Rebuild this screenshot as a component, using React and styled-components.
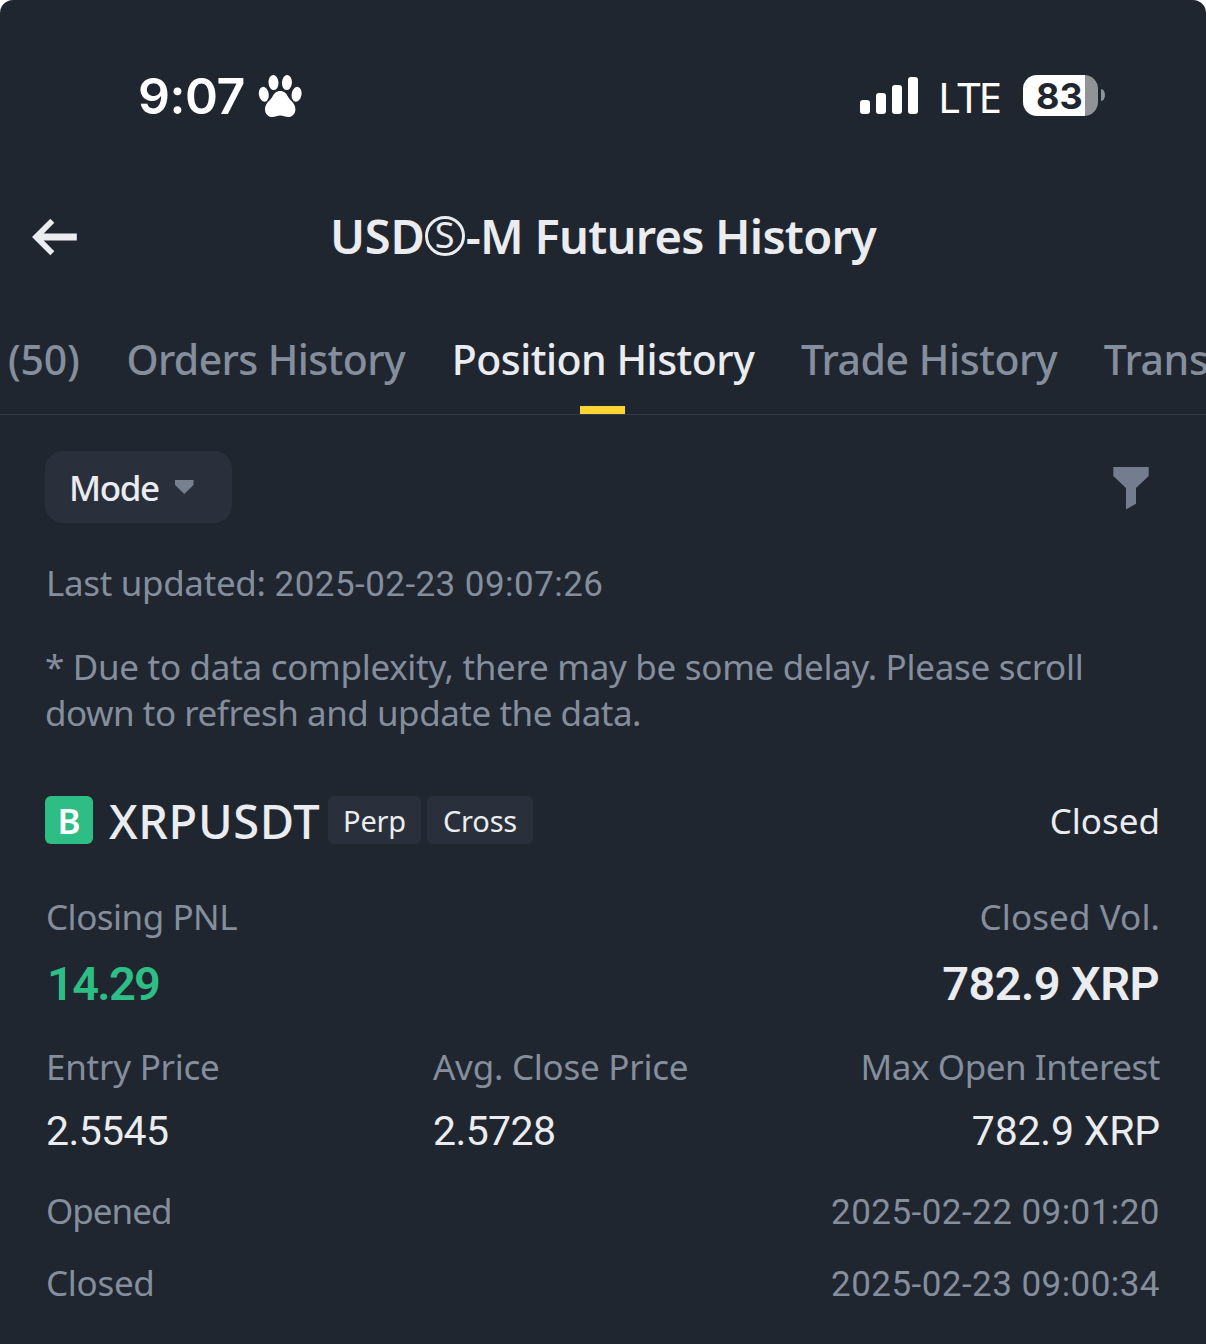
import styled, { createGlobalStyle } from "styled-components";

const TABS = [
  { label: "(50)", ls: -0.2 },
  { label: "Orders History", ls: -0.6 },
  { label: "Position History", ls: -0.5, active: true },
  { label: "Trade History", ls: -0.45 },
  { label: "Trans", ls: -0.4 },
];

const BARS = [14, 21, 29, 37];

export default function App() {
  return (
    <>
      <GlobalStyle />
      <Screen>
        <StatusBar>
          <StatusGroup>
            <Time>9:07</Time>
            <PawIcon />
          </StatusGroup>
          <StatusGroup>
            <Signal>
              {BARS.map((height) => (
                <SignalBar key={height} $height={height} />
              ))}
            </Signal>
            <Network>LTE</Network>
            <Battery>
              <BatteryBody>83</BatteryBody>
              <BatteryTip />
            </Battery>
          </StatusGroup>
        </StatusBar>

        <Header>
          <BackIcon />
          <Title>
            <TitlePart $ls={-0.2}>USD</TitlePart>
            <CircledS>S</CircledS>
            <TitlePart $ls={-0.75}>-M Futures History</TitlePart>
          </Title>
        </Header>

        <TabBar>
          {TABS.map(({ label, ls, active }) => (
            <Tab key={label} $ls={ls} $active={active}>
              {label}
            </Tab>
          ))}
        </TabBar>

        <Content>
          <Toolbar>
            <ModeButton>
              <ModeLabel>Mode</ModeLabel>
              <CaretIcon />
            </ModeButton>
            <FilterIcon />
          </Toolbar>

          <Updated>
            <Text $ls={-0.35}>Last updated:</Text>
            <Digits $ls={0.45}>2025-02-23 09:07:26</Digits>
          </Updated>

          <Notice>
            <Text $ls={-0.3}>
              * Due to data complexity, there may be some delay. Please scroll
            </Text>
            <Text $ls={-0.48}>down to refresh and update the data.</Text>
          </Notice>

          <PairRow>
            <Side>B</Side>
            <Symbol>XRPUSDT</Symbol>
            <Tag $width={93}>Perp</Tag>
            <Tag $width={106}>Cross</Tag>
            <Status>Closed</Status>
          </PairRow>

          <Summary>
            <Field>
              <Label $ls={-0.5}>Closing PNL</Label>
              <BigValue $green $ls={-1.7}>
                14.29
              </BigValue>
            </Field>
            <Field $right>
              <Label $ls={0.1}>Closed Vol.</Label>
              <BigValue $ls={-0.6}>782.9 XRP</BigValue>
            </Field>
          </Summary>

          <Prices>
            <Field>
              <Label $ls={-0.25}>Entry Price</Label>
              <Value $ls={-0.6}>2.5545</Value>
            </Field>
            <Field>
              <Label $ls={-0.25}>Avg. Close Price</Label>
              <Value $ls={-0.6}>2.5728</Value>
            </Field>
            <Field $right>
              <Label $ls={-0.45}>Max Open Interest</Label>
              <Value $ls={-0.2}>782.9 XRP</Value>
            </Field>
          </Prices>

          <Times>
            <TimeRow>
              <Text $ls={-1}>Opened</Text>
              <Digits $ls={0.45}>2025-02-22 09:01:20</Digits>
            </TimeRow>
            <TimeRow>
              <Text $ls={-0.3}>Closed</Text>
              <Digits $ls={0.45}>2025-02-23 09:00:34</Digits>
            </TimeRow>
          </Times>
        </Content>
      </Screen>
    </>
  );
}

function PawIcon() {
  return (
    <svg width="44" height="44" viewBox="0 0 44 44" fill="#fff">
      <ellipse cx="5.8" cy="20.3" rx="4.9" ry="7.5" transform="rotate(-9 5.8 20.3)" />
      <ellipse cx="15.5" cy="8.6" rx="5" ry="7.5" transform="rotate(-4 15.5 8.6)" />
      <ellipse cx="28.9" cy="8.6" rx="5" ry="7.5" transform="rotate(4 28.9 8.6)" />
      <ellipse cx="38.6" cy="20.3" rx="4.9" ry="7.5" transform="rotate(9 38.6 20.3)" />
      <path d="M22.2 17c3.8 0 6.1 2.3 8 6 1.7 3.3 7.2 6.1 7.2 12.2 0 4.6-3.1 7.8-7.2 7.8-3.2 0-5-1.5-8-1.5s-4.8 1.5-8 1.5c-4.1 0-7.2-3.2-7.2-7.8 0-6.1 5.500-8.900 7.200-12.200 1.900-3.700 4.200-6 8-6z" />
    </svg>
  );
}

function BackIcon() {
  return (
    <svg width="46" height="38" viewBox="0 0 46 38" fill="#eaecef">
      <path d="M0 19 18.3.7l4 4-10.6 10.8H44.8v7H11.7l10.6 10.8-4 4z" />
    </svg>
  );
}

function CaretIcon() {
  return (
    <svg width="19" height="14" viewBox="0 0 19 14" fill="#76808f">
      <path d="M0 0h18.5v5L9.3 14 0 5z" />
    </svg>
  );
}

function FilterIcon() {
  return (
    <svg width="36" height="43" viewBox="0 0 36 43" fill="#747d8e">
      <path d="M.3 0h35.4v9L23 21v15.7L13 42.5V21L.3 9z" />
    </svg>
  );
}

const GlobalStyle = createGlobalStyle`
  * {
    box-sizing: border-box;
  }

  body {
    margin: 0;
    background: #fff;
  }
`;

const Screen = styled.div`
  width: 1206px;
  height: 1344px;
  overflow: hidden;
  border-radius: 13px 13px 0 0;
  background: #202630;
  color: #eaecef;
  font-family: "Noto Sans", "Liberation Sans", sans-serif;
  font-size: 35px;
  line-height: 46px;

  svg {
    display: block;
    flex-shrink: 0;
  }
`;

const StatusBar = styled.div`
  height: 192px;
  padding: 0 101px 0 138px;
  display: flex;
  align-items: center;
  justify-content: space-between;
  color: #fff;
  font-family: Inter, sans-serif;
`;

const StatusGroup = styled.div`
  display: flex;
  align-items: center;
`;

const Time = styled.span`
  width: 120px;
  font-size: 50px;
  font-weight: 600;
  letter-spacing: -0.5px;
`;

const Signal = styled.div`
  height: 37px;
  margin-bottom: 2px;
  display: flex;
  align-items: flex-end;
  gap: 6px;
`;

const SignalBar = styled.i`
  width: 10px;
  height: ${({ $height }) => $height}px;
  border-radius: 3px;
  background: #fff;
`;

const Network = styled.span`
  width: 84px;
  padding: 2px 0 0 20px;
  margin-right: 21px;
  font-family: "Noto Sans", sans-serif;
  font-size: 42px;
  letter-spacing: -2px;
`;

const Battery = styled.div`
  margin-bottom: 2px;
  display: flex;
  align-items: center;
  gap: 3px;
`;

const BatteryBody = styled.div`
  width: 75px;
  height: 41px;
  padding-left: 13px;
  border-radius: 14px;
  background: linear-gradient(to right, #fff 62px, #909398 62px);
  color: #202630;
  font-size: 36px;
  font-weight: 700;
  line-height: 42px;
`;

const BatteryTip = styled.i`
  width: 4px;
  height: 12px;
  border-radius: 0 4px 4px 0 / 0 6px 6px 0;
  background: #909398;
`;

const Header = styled.div`
  height: 90px;
  padding: 0 32px;
  display: grid;
  grid-template-columns: 1fr auto 1fr;
  align-items: center;
`;

const Title = styled.h1`
  margin: 0;
  display: flex;
  align-items: center;
  font-size: 47px;
  font-weight: 600;
`;

const TitlePart = styled.span`
  margin-bottom: 2px;
  white-space: pre;
  letter-spacing: ${({ $ls }) => $ls}px;
`;

const CircledS = styled.span`
  width: 40px;
  height: 40px;
  margin: 0 1px 3px 0;
  border: 3px solid #eaecef;
  border-radius: 50%;
  font-size: 36px;
  font-weight: 400;
  line-height: 32px;
  text-align: center;
`;

const TabBar = styled.nav`
  height: 133px;
  padding: 53px 0 0 8px;
  display: flex;
  gap: 46.7px;
  border-bottom: 1px solid #333b47;
`;

const Tab = styled.span`
  position: relative;
  flex-shrink: 0;
  color: ${({ $active }) => ($active ? "#eaecef" : "#848e9c")};
  font-size: 41px;
  font-weight: 500;
  line-height: 48px;
  letter-spacing: ${({ $ls }) => $ls}px;

  &::after {
    content: "";
    display: ${({ $active }) => ($active ? "block" : "none")};
    position: absolute;
    bottom: 0;
    left: calc(50% - 23px);
    width: 45px;
    height: 8px;
    background: #fcd535;
  }
`;

const Content = styled.main`
  padding: 36px 45px 0;
`;

const Toolbar = styled.div`
  height: 72px;
  padding-right: 12px;
  display: flex;
  align-items: center;
  justify-content: space-between;

  > svg {
    margin-top: 2px;
  }
`;

const ModeButton = styled.button`
  width: 187px;
  height: 72px;
  padding: 0 0 0 24px;
  display: flex;
  align-items: center;
  gap: 16px;
  border: 0;
  border-radius: 18px;
  background: #29303b;
  color: #eaecef;
  font: 500 35px/46px "Noto Sans", sans-serif;
`;

const ModeLabel = styled.span`
  padding-top: 2px;
  letter-spacing: -1.4px;
`;

const Text = styled.span`
  white-space: pre;
  letter-spacing: ${({ $ls }) => $ls}px;
`;

const Digits = styled(Text)`
  font-family: Roboto, sans-serif;
`;

const Updated = styled.div`
  height: 46px;
  margin-top: 37px;
  padding-left: 1px;
  display: flex;
  align-items: baseline;
  gap: 9px;
  color: #848e9c;
`;

const Notice = styled.p`
  margin: 38px 0 0;
  display: flex;
  flex-direction: column;
  color: #848e9c;
`;

const PairRow = styled.div`
  height: 48px;
  margin-top: 60px;
  display: flex;
  align-items: center;
`;

const Side = styled.span`
  width: 48px;
  height: 48px;
  border-radius: 6px;
  background: #2ebd85;
  color: #fff;
  font-weight: 600;
  line-height: 50px;
  text-align: center;
`;

const Symbol = styled.span`
  width: 235px;
  padding: 2px 0 0 16px;
  font-size: 47px;
  font-weight: 500;
  line-height: 48px;
  letter-spacing: 0.6px;
`;

const Tag = styled.span`
  width: ${({ $width }) => $width}px;
  height: 48px;
  margin-right: 6px;
  padding-top: 1px;
  border-radius: 6px;
  background: #29303b;
  font-size: 29px;
  line-height: 48px;
  letter-spacing: -0.2px;
  text-align: center;
`;

const Status = styled.span`
  margin-left: auto;
  padding: 1px 1px 0 0;
`;

const Summary = styled.div`
  margin-top: 50px;
  display: flex;
  justify-content: space-between;
`;

const Prices = styled.div`
  margin-top: 32px;
  display: grid;
  grid-template-columns: 387px 1fr auto;
`;

const Field = styled.div`
  display: flex;
  flex-direction: column;
  align-items: ${({ $right }) => ($right ? "flex-end" : "flex-start")};
  gap: 16px;
`;

const Label = styled(Text)`
  padding: 0 1px;
  color: #848e9c;
`;

const BigValue = styled(Digits)`
  padding: 0 2px;
  color: ${({ $green }) => ($green ? "#2ebd85" : "#eaecef")};
  font-size: 47px;
  font-weight: 600;
  line-height: 56px;
`;

const Value = styled(Digits)`
  padding: 0 1px;
  font-size: 41px;
  line-height: 50px;
`;

const Times = styled.div`
  margin-top: 32px;
  display: flex;
  flex-direction: column;
  gap: 26px;
  color: #848e9c;
`;

const TimeRow = styled.div`
  height: 46px;
  padding: 0 1px;
  display: flex;
  align-items: baseline;
  justify-content: space-between;
`;
